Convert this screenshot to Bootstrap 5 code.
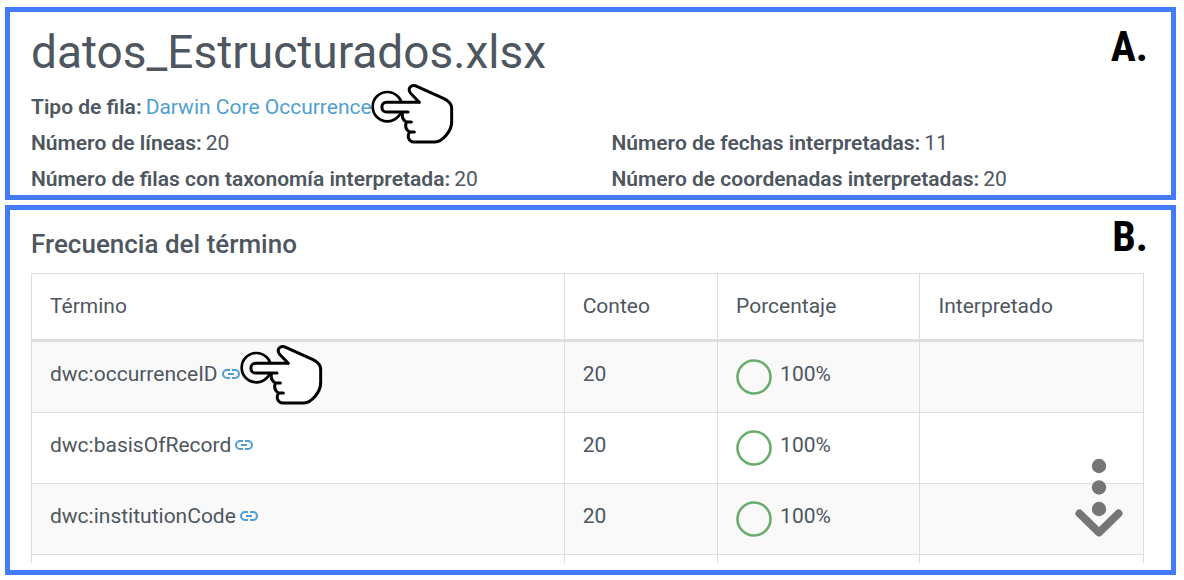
<!DOCTYPE html>
<html lang="es">
<head>
<meta charset="utf-8">
<meta name="viewport" content="width=device-width, initial-scale=1">
<title>datos_Estructurados.xlsx</title>
<link href="https://cdn.jsdelivr.net/npm/bootstrap@5.3.0/dist/css/bootstrap.min.css" rel="stylesheet">
<style>
  body { font-family: Roboto, "Liberation Sans", sans-serif; font-size: 21px; line-height: 36px; color: #4e565f; background: #fff; }
  a { color: #509fd0; text-decoration: none; }
  .page { padding: 7px 8px 5px 5px; gap: 5px; }
  .panel { border: 5px solid #447bfb; padding: 0 27px 0 21px; }
  .panel-a { padding-top: 15px; }
  .panel-b { padding-top: 20px; padding-bottom: 7px; }
  .file-title { font-size: 46px; line-height: 50px; font-weight: 400; margin: 0 0 12px; }
  .section-title { font-size: 26px; line-height: 28px; font-weight: 500; margin: 0 0 15px; }
  .facts { margin-bottom: -2px; }
  .facts dt { font-weight: 600; }
  .tag { position: absolute; top: 10px; right: 23px; font-family: "Roboto Condensed", Roboto, sans-serif; font-size: 42px; line-height: 50px; font-weight: 700; color: #000; }
  .panel-b .tag { top: 2px; }
  .hand { position: absolute; left: 100%; top: 50%; width: 84px; height: 62px; z-index: 2; }
  .row-type .hand { margin: -24px 0 0 -2px; }
  .term .hand { margin: -30px 0 0 -1px; }
  .freq { table-layout: fixed; color: inherit; --bs-table-color: #4e565f; --bs-table-striped-color: #4e565f; --bs-table-striped-bg: #f9f9f9; border-color: #ddd; }
  .freq > thead > tr > * { padding: 14px 18px 15px; font-weight: 400; }
  .freq > tbody > tr > * { padding: 14px 18px 20px; }
  .freq > thead { border-bottom: 3px solid #ddd; }
  .freq > tbody > tr.next-row > td { padding: 4px; line-height: 0; border-bottom: 0; }
  .freq > tbody > tr.next-row { border-bottom: 0; }
  .ring { width: 36px; height: 36px; margin-top: 3px; margin-bottom: -3px; }
  .chain { width: 18px; height: 10px; }
  .scroll-cue { position: absolute; right: 47px; bottom: 31px; width: 50px; height: 81px; }
</style>
</head>
<body>
<svg class="d-none" aria-hidden="true">
  <symbol id="hand" viewBox="30 39 252 186">
    <circle cx="82" cy="110" r="44" fill="none" stroke="#000" stroke-width="8"/>
    <path d="M178 97L153 71C140 56 154 40 172 50L252 86Q275 97 275 115V158C274 184 247 215 225 216H162C146 216 140 198 149 186C138 180 135 168 139 156C128 150 125 138 128 126H80C61 126 61 97 80 97Z" fill="#fff"/>
    <path d="M178 97L153 71C140 56 154 40 172 50L252 86Q275 97 275 115V158C274 184 247 215 225 216H162C146 216 140 198 149 186H163M149 186C138 180 135 168 139 156H154M139 156C128 150 125 138 128 126M144 126H80C61 126 61 97 80 97H178" fill="none" stroke="#000" stroke-width="9" stroke-linecap="round" stroke-linejoin="round"/>
  </symbol>
  <symbol id="chain" viewBox="0 0 18 10">
    <path d="M8 1H5a4 4 0 0 0 0 8h3M10 1h3a4 4 0 0 1 0 8h-3M6 5h6" fill="none" stroke="#509fd0" stroke-width="2"/>
  </symbol>
  <symbol id="ring" viewBox="0 0 36 36">
    <circle cx="18" cy="18" r="16.5" fill="none" stroke="#69ad6c" stroke-width="2.6"/>
  </symbol>
</svg>

<main class="page d-flex flex-column">
  <section class="panel panel-a position-relative">
    <span class="tag">A.</span>
    <h1 class="file-title">datos_Estructurados.xlsx</h1>
    <dl class="facts row g-0">
      <div class="col-12 d-flex gap-1"><dt>Tipo de fila:</dt>
        <dd class="row-type position-relative mb-0"><a href="#occurrence">Darwin Core Occurrence</a><svg class="hand" aria-hidden="true"><use href="#hand"/></svg></dd></div>
      <div class="col-6 d-flex gap-1"><dt>Número de líneas:</dt><dd class="mb-0">20</dd></div>
      <div class="col-6 d-flex gap-1 ps-4"><dt>Número de fechas interpretadas:</dt><dd class="mb-0">11</dd></div>
      <div class="col-6 d-flex gap-1"><dt>Número de filas con taxonomía interpretada:</dt><dd class="mb-0">20</dd></div>
      <div class="col-6 d-flex gap-1 ps-4"><dt>Número de coordenadas interpretadas:</dt><dd class="mb-0">20</dd></div>
    </dl>
  </section>

  <section class="panel panel-b position-relative">
    <span class="tag">B.</span>
    <h2 class="section-title">Frecuencia del término</h2>
    <table class="freq table table-bordered table-striped mb-0">
      <colgroup><col style="width:47.9%"><col style="width:13.8%"><col style="width:18.2%"><col style="width:20.1%"></colgroup>
      <thead><tr><th scope="col">Término</th><th scope="col">Conteo</th><th scope="col">Porcentaje</th><th scope="col">Interpretado</th></tr></thead>
      <tbody>
        <tr>
          <td><span class="term position-relative d-inline-flex align-items-center gap-1">dwc:occurrenceID<a class="d-flex" href="#occurrenceID" aria-label="dwc:occurrenceID"><svg class="chain"><use href="#chain"/></svg></a><svg class="hand" aria-hidden="true"><use href="#hand"/></svg></span></td>
          <td>20</td>
          <td><div class="d-flex gap-2"><svg class="ring" aria-hidden="true"><use href="#ring"/></svg>100%</div></td>
          <td></td>
        </tr>
        <tr>
          <td><span class="term d-inline-flex align-items-center gap-1">dwc:basisOfRecord<a class="d-flex" href="#basisOfRecord" aria-label="dwc:basisOfRecord"><svg class="chain"><use href="#chain"/></svg></a></span></td>
          <td>20</td>
          <td><div class="d-flex gap-2"><svg class="ring" aria-hidden="true"><use href="#ring"/></svg>100%</div></td>
          <td></td>
        </tr>
        <tr>
          <td><span class="term d-inline-flex align-items-center gap-1">dwc:institutionCode<a class="d-flex" href="#institutionCode" aria-label="dwc:institutionCode"><svg class="chain"><use href="#chain"/></svg></a></span></td>
          <td>20</td>
          <td><div class="d-flex gap-2"><svg class="ring" aria-hidden="true"><use href="#ring"/></svg>100%</div></td>
          <td></td>
        </tr>
        <tr class="next-row"><td></td><td></td><td></td><td></td></tr>
      </tbody>
    </table>
    <svg class="scroll-cue" viewBox="0 0 50 81" aria-hidden="true">
      <g fill="#757575"><circle cx="25" cy="8" r="7.2"/><circle cx="25" cy="29.5" r="7.2"/><circle cx="25" cy="51" r="7.2"/></g>
      <path d="M5.5 55.5L25 74.5L44.5 55.5" fill="none" stroke="#757575" stroke-width="8" stroke-linecap="round" stroke-linejoin="round"/>
    </svg>
  </section>
</main>
<script src="https://cdn.jsdelivr.net/npm/bootstrap@5.3.0/dist/js/bootstrap.bundle.min.js"></script>
</body>
</html>
